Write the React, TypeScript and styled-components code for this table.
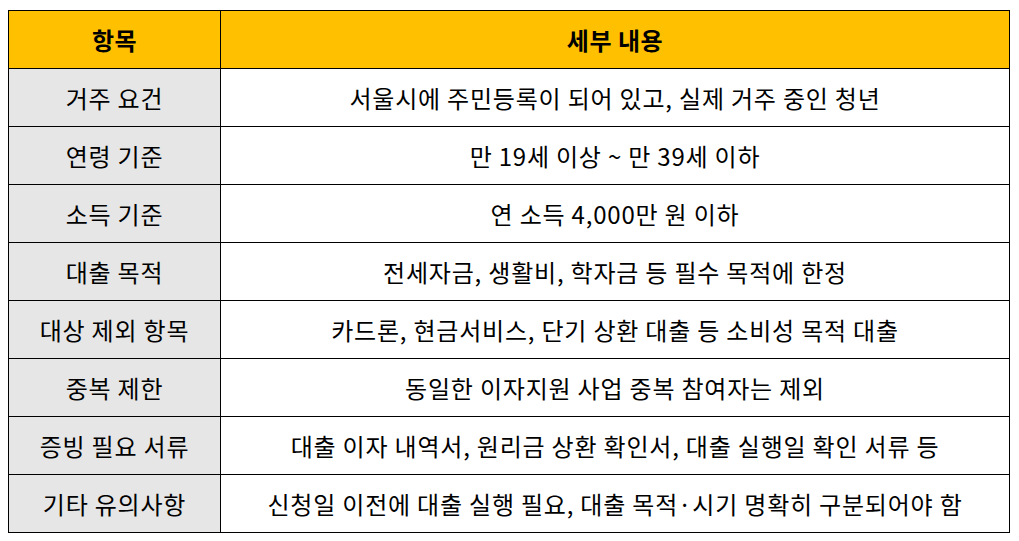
import React from "react";
import styled, { createGlobalStyle } from "styled-components";

const GlobalStyle = createGlobalStyle`
  body {
    margin: 0;
    background: #ffffff;
    font-family: "Noto Sans CJK KR", "Noto Sans", sans-serif;
    color: #000000;
  }
`;

const Page = styled.div`
  padding: 10px 9px 0 8px;
`;

const Table = styled.table`
  width: 1002px;
  border-collapse: collapse;
  table-layout: fixed;
`;

const HeadCell = styled.th<{ $narrow?: boolean }>`
  width: ${({ $narrow }) => ($narrow ? "211px" : "auto")};
  height: 57px;
  padding: 0;
  background: #ffc000;
  border: 1.5px solid #000;
  font-size: 24px;
  font-weight: 700;
  text-align: center;
  vertical-align: middle;
  letter-spacing: 0.5px;
`;

const Cell = styled.td<{ $label?: boolean }>`
  height: 57px;
  padding: 0;
  background: ${({ $label }) => ($label ? "#e6e6e6" : "#ffffff")};
  border: 1.5px solid #000;
  font-size: 24px;
  font-weight: 400;
  line-height: 1;
  text-align: center;
  vertical-align: middle;
  letter-spacing: 0.8px;
`;

const rows: [string, string][] = [
  ["거주 요건", "서울시에 주민등록이 되어 있고, 실제 거주 중인 청년"],
  ["연령 기준", "만 19세 이상 ~ 만 39세 이하"],
  ["소득 기준", "연 소득 4,000만 원 이하"],
  ["대출 목적", "전세자금, 생활비, 학자금 등 필수 목적에 한정"],
  ["대상 제외 항목", "카드론, 현금서비스, 단기 상환 대출 등 소비성 목적 대출"],
  ["중복 제한", "동일한 이자지원 사업 중복 참여자는 제외"],
  ["증빙 필요 서류", "대출 이자 내역서, 원리금 상환 확인서, 대출 실행일 확인 서류 등"],
  ["기타 유의사항", "신청일 이전에 대출 실행 필요, 대출 목적·시기 명확히 구분되어야 함"],
];

export default function App() {
  return (
    <Page>
      <GlobalStyle />
      <Table>
        <thead>
          <tr>
            <HeadCell $narrow>항목</HeadCell>
            <HeadCell>세부 내용</HeadCell>
          </tr>
        </thead>
        <tbody>
          {rows.map(([label, detail]) => (
            <tr key={label}>
              <Cell $label>{label}</Cell>
              <Cell>{detail}</Cell>
            </tr>
          ))}
        </tbody>
      </Table>
    </Page>
  );
}
